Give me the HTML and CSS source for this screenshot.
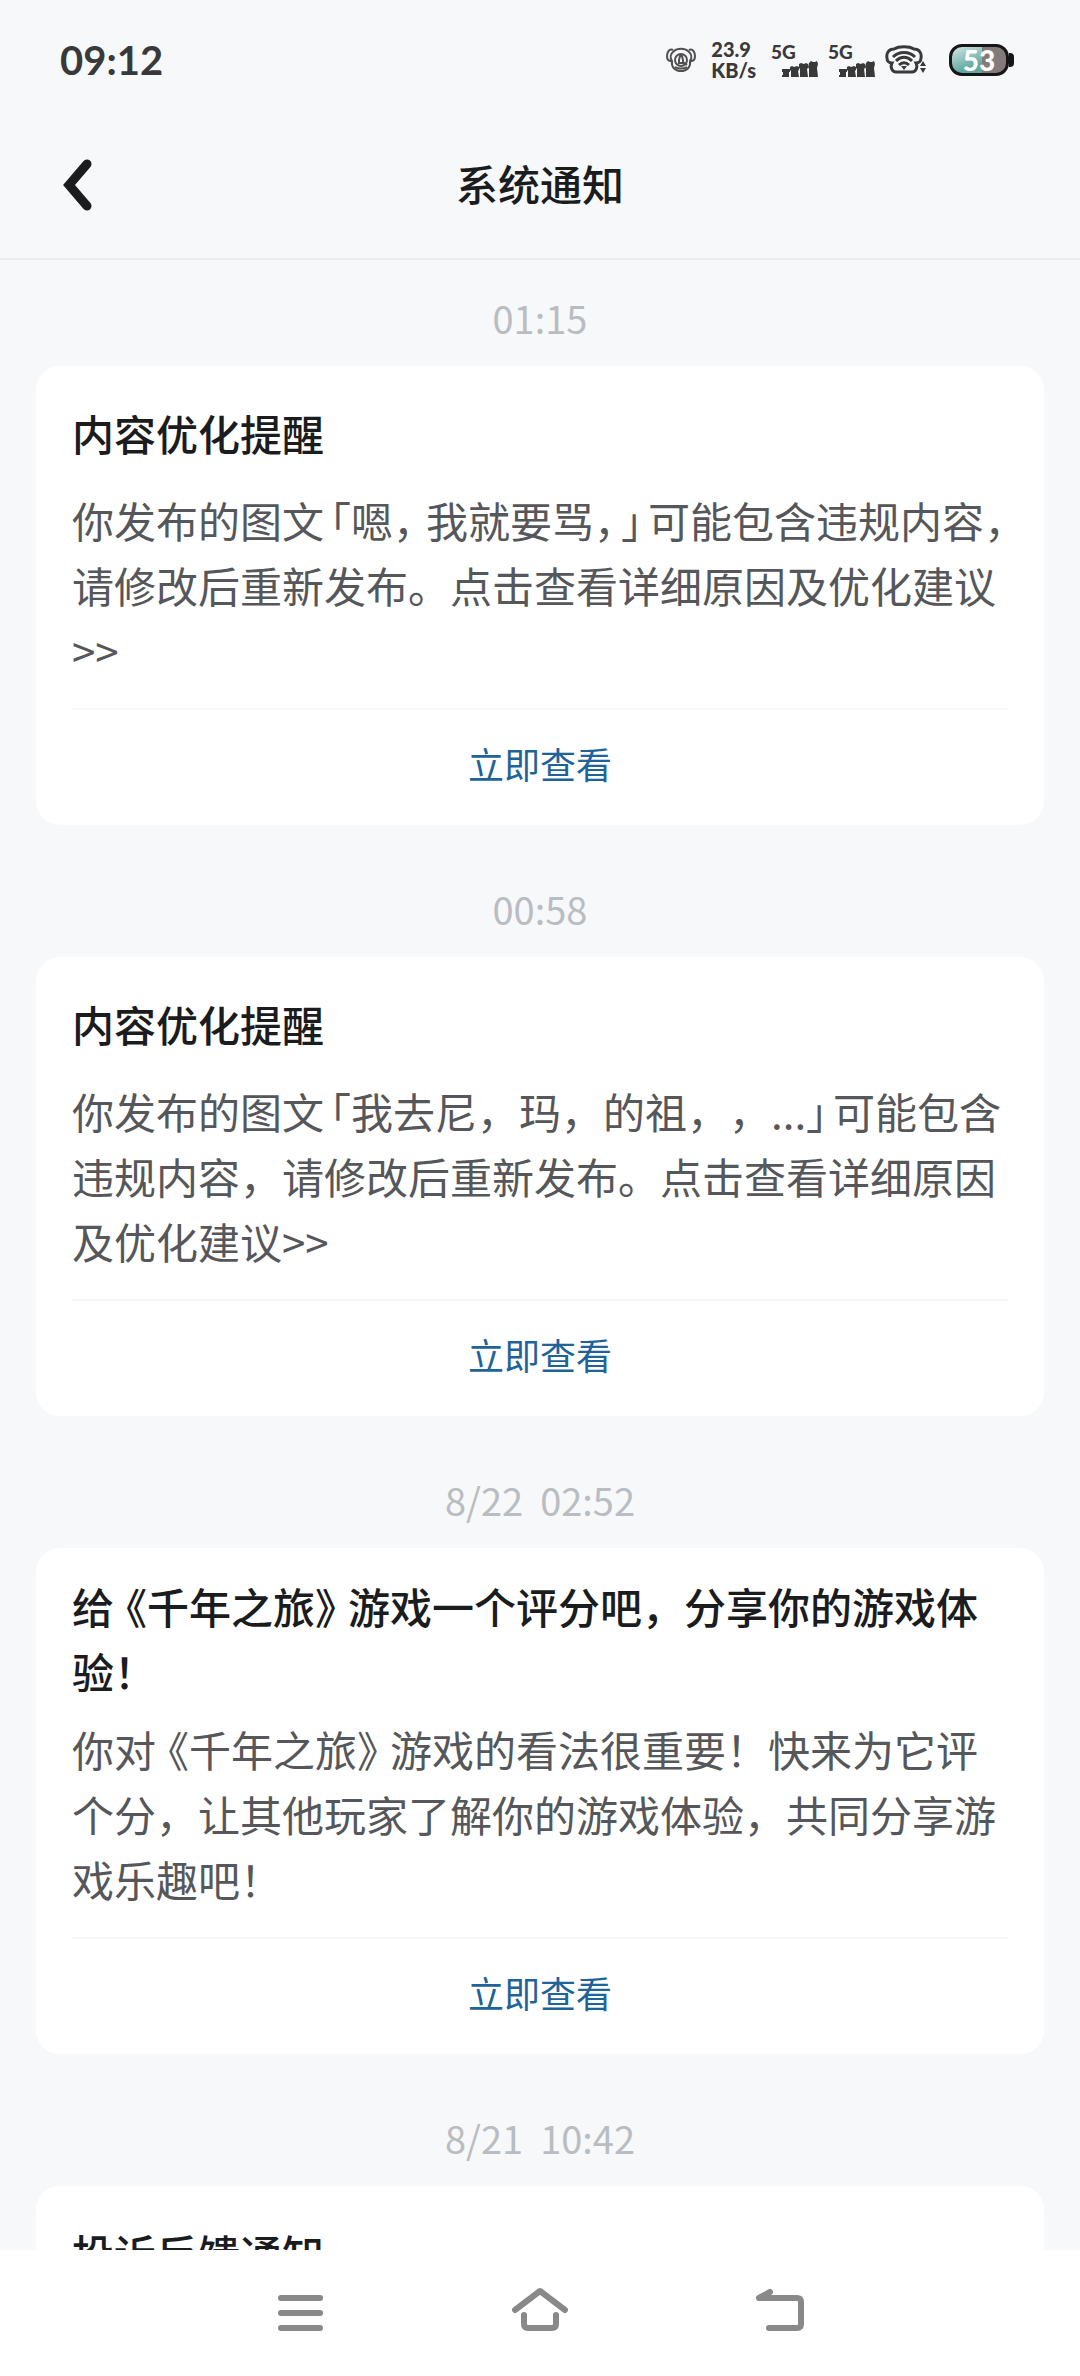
FILE: index.html
```html
<!DOCTYPE html>
<html lang="zh-CN">
<head>
	<meta charset="UTF-8">
	<meta name="viewport" content="width=device-width, initial-scale=1">
	<title>系统通知</title>
	<link rel="stylesheet" href="styles.css">
</head>
<body>
	<header class="header">
		<div class="status">
			<span class="clock">09:12</span>
			<svg class="icon-bear" width="30" height="26" viewBox="0 0 30 26" fill="none" stroke="#505051" stroke-width="2">
				<path d="M8 4C11 1 19 1 22 4C26 7 26 11 24 14C25 20 21 24 15 24C9 24 5 20 6 14C4 11 4 7 8 4Z"/>
				<path d="M7 3C3 1 1 6 1 9C1 12 2 14 5 14M23 3C27 1 29 6 29 9C29 12 28 14 25 14"/>
				<circle cx="15" cy="13" r="6"/>
				<path d="M13 16V13L14 9H16L17 13V16ZM9 20C12 22 18 22 21 20M17 15L21 18"/>
			</svg>
			<div class="speed"><span>23.9</span><span>KB/s</span></div>
			<div class="signal">
				<span>5G</span>
				<svg width="36" height="17" viewBox="0 0 36 17" fill="#39393a"><path d="M0 8H8V11H7V16H0V14H1V11H0ZM8 6L10 5L12 6L15 5L17 6V9L16 10L17 16H9V10L8 9ZM17 3L19 2L22 3L24 2L26 3V7L25 8L26 16H18V8L17 7ZM27 2L29 0L31 1H33L35 0L36 3L35 7L36 16H27V8L26 6Z"/></svg>
			</div>
			<div class="signal">
				<span>5G</span>
				<svg width="36" height="17" viewBox="0 0 36 17" fill="#39393a"><path d="M0 8H8V11H7V16H0V14H1V11H0ZM8 6L10 5L12 6L15 5L17 6V9L16 10L17 16H9V10L8 9ZM17 3L19 2L22 3L24 2L26 3V7L25 8L26 16H18V8L17 7ZM27 2L29 0L31 1H33L35 0L36 3L35 7L36 16H27V8L26 6Z"/></svg>
			</div>
			<svg class="icon-wifi" width="42" height="30" viewBox="0 0 42 30" fill="none" stroke="#39393a" stroke-width="3">
				<path d="M9 4C14 1 24 1 29 4C34 4 37 8 36 13C36 16 34 18 31 18C33 22 31 27 27 27H11C7 27 5 22 7 18C4 18 2 16 2 13C1 8 4 4 9 4Z"/>
				<path d="M8 12C14 6 24 6 30 12M11 16C16 11 22 11 27 16M14 20C17 17 21 17 24 20"/>
				<path d="M16 21H22L19 25ZM35 21L38 16L41 21ZM35 23L38 28L41 23Z" fill="#39393a" stroke="none"/>
			</svg>
			<div class="battery">53</div>
		</div>
		<div class="titlebar">
			<button class="back" type="button" aria-label="返回">
				<svg width="32" height="56" viewBox="0 0 32 56" fill="none" stroke="#1a1c1e" stroke-width="9" stroke-linecap="round"><path d="M27 7L9 28L27 49"/></svg>
			</button>
			<h1>系统通知</h1>
		</div>
	</header>

	<main class="list">
		<time class="date">01:15</time>
		<section class="card">
			<h2>内容优化提醒</h2>
			<p>你发布的图文<span class="open">「</span>嗯<span class="close wide">，</span>我就要骂<span class="close">，</span><span class="close">」</span>可能包含违规内容<span class="half">，</span>请修改后重新发布。点击查看详细原因及优化建议&gt;&gt;</p>
			<a class="more" href="#">立即查看</a>
		</section>

		<time class="date">00:58</time>
		<section class="card">
			<h2>内容优化提醒</h2>
			<p>你发布的图文<span class="open">「</span>我去尼，玛，的祖，，...<span class="close">」</span>可能包含违规内容，请修改后重新发布。点击查看详细原因及优化建议&gt;&gt;</p>
			<a class="more" href="#">立即查看</a>
		</section>

		<time class="date">8/22  02:52</time>
		<section class="card">
			<h2><span>给<span class="open wide">《</span>千年之旅<span class="close wide">》</span>游戏一个评分吧，分享你的游戏体验！</span></h2>
			<p>你对<span class="open wide">《</span>千年之旅<span class="close wide">》</span>游戏的看法很重要！快来为它评个分，让其他玩家了解你的游戏体验，共同分享游戏乐趣吧！</p>
			<a class="more" href="#">立即查看</a>
		</section>

		<time class="date">8/21  10:42</time>
		<section class="card">
			<h2>投诉反馈通知</h2>
		</section>
	</main>

	<nav class="navbar">
		<button type="button" aria-label="菜单">
			<svg width="64" height="64" viewBox="0 0 64 64"><path d="M13 17H52M13 32H52M13 47H52"/></svg>
		</button>
		<button type="button" aria-label="主页">
			<svg width="64" height="64" viewBox="0 0 64 64"><path d="M7 29L32 10L57 29M16 34V43Q16 47 20 47H44Q48 47 48 43V34"/></svg>
		</button>
		<button type="button" aria-label="后退">
			<svg width="64" height="64" viewBox="0 0 64 64"><path d="M22 11L11 17H49Q53 17 53 21V43Q53 47 49 47H21"/></svg>
		</button>
	</nav>
</body>
</html>
```

FILE: styles.css
```css
html, body {
	margin:0;
	padding:0;
	height:100%;
}

body {
	display:flex;
	flex-direction:column;
	background:#f6f8fa;
	color:#1a1c1e;
	font-family:"Noto Sans CJK SC", sans-serif;
	font-size:42px;
	line-height:65px;
	text-spacing-trim:space-all;
	overflow:hidden;
}

button {
	padding:0;
	border:0;
	background:none;
}

svg {
	display:block;
}

.header {
	flex:none;
	background:#f7f8fa;
	border-bottom:2px solid #e9ebed;
}

/* status bar */

.status {
	display:flex;
	align-items:center;
	box-sizing:border-box;
	height:112px;
	padding:8px 66px 0 60px;
	color:#39393a;
	font-family:Lato, sans-serif;
	font-weight:700;
}

.clock {
	flex:1;
	font-size:40px;
}

.speed {
	display:flex;
	flex-direction:column;
	margin:0 15px;
	font-size:20px;
	font-weight:900;
	line-height:21px;
}

.signal {
	width:47px;
	margin-right:10px;
	font-size:19px;
	font-weight:900;
	line-height:19px;
}

.signal span {
	display:block;
}

.signal svg {
	margin-left:auto;
}

.icon-wifi {
	margin-right:22px;
}

.battery {
	position:relative;
	box-sizing:border-box;
	width:60px;
	height:32px;
	margin-right:5px;
	border:3px solid #161616;
	border-radius:13px;
	background:linear-gradient(90deg, transparent 55%, #857a7a 55%), linear-gradient(160deg, #d2e6e4, #62a8a0 60%);
	color:#fff;
	font-size:28px;
	font-weight:900;
	line-height:26px;
	text-align:center;
}

.battery:after {
	content:"";
	position:absolute;
	right:-8px;
	top:6px;
	width:5px;
	height:14px;
	border-radius:0 4px 4px 0;
	background:#161616;
}

/* title bar */

.titlebar {
	display:grid;
	grid-template-columns:1fr auto 1fr;
	align-items:center;
	height:146px;
	padding:0 60px;
}

.back {
	justify-self:start;
}

h1, h2 {
	margin:0;
	font-size:42px;
	font-weight:500;
}

h1 {
	padding-bottom:5px;
}

/* notifications */

.list {
	flex:1;
	min-height:0;
	padding:0 36px;
	overflow:hidden;
}

.date {
	display:block;
	padding:31px 0 21px;
	color:#b9bdc1;
	font-size:38px;
	line-height:54px;
	text-align:center;
	white-space:pre;
}

.card {
	margin-bottom:26px;
	padding:25px 36px 0;
	border-radius:24px;
	background:#fff;
}

.card h2 {
	display:flex;
	align-items:center;
	min-height:83px;
}

.card p {
	margin:13px 0 26px;
	color:#55575a;
}

.more {
	display:block;
	padding-bottom:8px;
	border-top:2px solid #f6f7f8;
	color:#1f6499;
	font-size:36px;
	line-height:107px;
	text-align:center;
	text-decoration:none;
}

/* half width punctuation */

.half, .open, .close {
	font-feature-settings:"halt";
}

.open {
	padding-left:6px;
}

.close {
	padding-right:6px;
}

.open.wide {
	padding-left:12px;
}

.close.wide {
	padding-right:12px;
}

/* system navigation */

.navbar {
	display:flex;
	flex:none;
	align-items:center;
	justify-content:center;
	gap:176px;
	height:126px;
	background:#fff;
}

.navbar svg {
	fill:none;
	stroke:#898989;
	stroke-width:6;
	stroke-linecap:round;
	stroke-linejoin:round;
}
```
